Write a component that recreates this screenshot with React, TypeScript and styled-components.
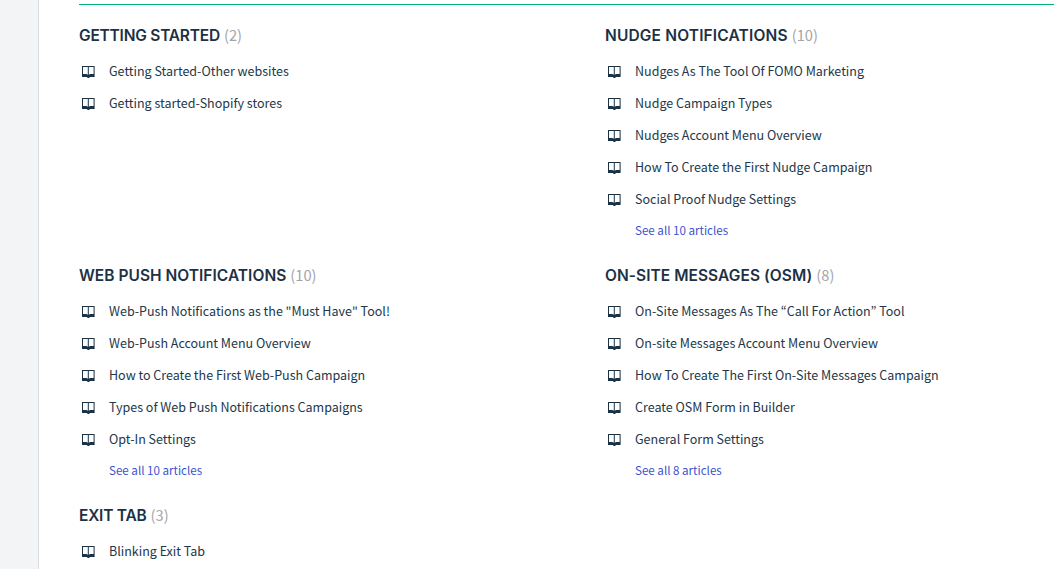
import React from "react";
import styled, { createGlobalStyle } from "styled-components";

const GlobalStyle = createGlobalStyle`
  * { box-sizing: border-box; }
  body {
    margin: 0;
    background: #ffffff;
    color: #22374a;
    font-family: "Noto Sans CJK KR", "Noto Sans", sans-serif;
    font-weight: 400;
    overflow: hidden;
  }
`;

const Page = styled.div`
  display: flex;
  height: 100vh;
  overflow: hidden;
`;

const Rail = styled.aside`
  flex: 0 0 39px;
  background: #f3f4f6;
  border-right: 1px solid #d9dde2;
`;

const Main = styled.main`
  flex: 1;
  min-width: 0;
  padding: 4px 0 0 40px;
`;

const Panel = styled.div`
  border-top: 1px solid #00b27a;
  padding-top: 14px;
`;

const Grid = styled.div`
  display: grid;
  grid-template-columns: 526px 449px;
  grid-auto-rows: 240px;
`;

const Heading = styled.h2`
  display: flex;
  align-items: flex-end;
  gap: 4px;
  height: 33px;
  margin: 0 0 3px;
  white-space: nowrap;
`;

const Title = styled.span<{ $track: number }>`
  font: 600 15.5px/32px Inter, sans-serif;
  letter-spacing: ${(p) => p.$track}px;
  color: #1c3144;
`;

const Count = styled.span`
  font-size: 14.7px;
  font-weight: 400;
  line-height: 34px;
  color: #a3a5a9;
`;

const List = styled.ul`
  list-style: none;
  margin: 0;
  padding: 0;
`;

const Item = styled.li`
  display: flex;
  align-items: center;
  gap: 14px;
  height: 32px;
  padding-left: 3px;
`;

const ArticleLink = styled.a`
  font-size: 12.5px;
  line-height: 32px;
  white-space: nowrap;
`;

const SeeAll = styled.a`
  display: block;
  padding-left: 30px;
  font-size: 11.6px;
  line-height: 31px;
  color: #3a52d0;
`;

const Icon = styled.svg`
  flex: 0 0 13px;
  display: block;
  margin-top: 2px;
`;

const BookIcon = () => (
  <Icon width="13" height="12" viewBox="0 0 13 12">
    <path
      fill="#1c3144"
      fillRule="evenodd"
      d="M0 0H12.6V11H7.8L7.2 12H5.6L5 11H0ZM1 1V8H4.2Q5.4 8 5.8 9V1ZM6.8 1V9Q7.2 8 8.4 8H11.6V1Z"
    />
  </Icon>
);

interface Category {
  title: string;
  track: number;
  count: number;
  articles: string[];
}

const categories: Category[] = [
  {
    title: "GETTING STARTED",
    track: -0.22,
    count: 2,
    articles: ["Getting Started-Other websites", "Getting started-Shopify stores"],
  },
  {
    title: "NUDGE NOTIFICATIONS",
    track: 0.16,
    count: 10,
    articles: [
      "Nudges As The Tool Of FOMO Marketing",
      "Nudge Campaign Types",
      "Nudges Account Menu Overview",
      "How To Create the First Nudge Campaign",
      "Social Proof Nudge Settings",
    ],
  },
  {
    title: "WEB PUSH NOTIFICATIONS",
    track: 0.03,
    count: 10,
    articles: [
      'Web-Push Notifications as the "Must Have" Tool!',
      "Web-Push Account Menu Overview",
      "How to Create the First Web-Push Campaign",
      "Types of Web Push Notifications Campaigns",
      "Opt-In Settings",
    ],
  },
  {
    title: "ON-SITE MESSAGES (OSM)",
    track: 0.05,
    count: 8,
    articles: [
      "On-Site Messages As The “Call For Action” Tool",
      "On-site Messages Account Menu Overview",
      "How To Create The First On-Site Messages Campaign",
      "Create OSM Form in Builder",
      "General Form Settings",
    ],
  },
  { title: "EXIT TAB", track: -0.22, count: 3, articles: ["Blinking Exit Tab"] },
];

export default function App() {
  return (
    <>
      <GlobalStyle />
      <Page>
        <Rail />
        <Main>
          <Panel>
            <Grid>
              {categories.map((c) => (
                <section key={c.title}>
                  <Heading>
                    <Title $track={c.track}>{c.title}</Title>
                    <Count>({c.count})</Count>
                  </Heading>
                  <List>
                    {c.articles.map((text) => (
                      <Item key={text}>
                        <BookIcon />
                        <ArticleLink>{text}</ArticleLink>
                      </Item>
                    ))}
                  </List>
                  {c.count > 5 && <SeeAll>See all {c.count} articles</SeeAll>}
                </section>
              ))}
            </Grid>
          </Panel>
        </Main>
      </Page>
    </>
  );
}
